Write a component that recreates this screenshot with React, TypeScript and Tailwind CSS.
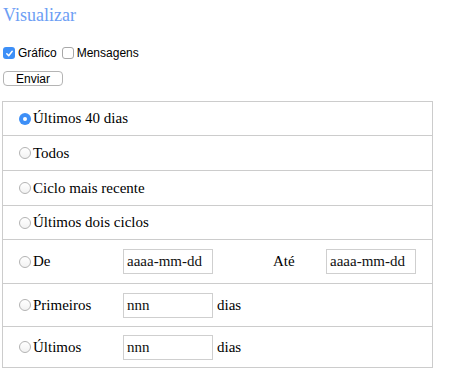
import { useState } from 'react'

type RowKind = 'last40' | 'all' | 'recent' | 'two' | 'range' | 'first' | 'last'

function Radio({ checked }: { checked: boolean }) {
  return checked ? (
    <span className="flex h-[12px] w-[12px] shrink-0 items-center justify-center rounded-full bg-[#3d8ff7]">
      <span className="h-[4px] w-[4px] rounded-full bg-white" />
    </span>
  ) : (
    <span className="block h-[12px] w-[12px] shrink-0 rounded-full border border-[#b3b3b3] bg-gradient-to-b from-white to-[#f2f2f2]" />
  )
}

function Check({ checked }: { checked: boolean }) {
  return checked ? (
    <span className="flex h-[12px] w-[12px] shrink-0 items-center justify-center rounded-[3px] bg-[#3d8ff7]">
      <svg width="9" height="9" viewBox="0 0 10 10">
        <path d="M2 5.3 L4.1 7.4 L8 2.6" fill="none" stroke="white" strokeWidth="1.7" strokeLinecap="round" strokeLinejoin="round" />
      </svg>
    </span>
  ) : (
    <span className="block h-[12px] w-[12px] shrink-0 rounded-[3px] border border-[#a8a8a8] bg-white" />
  )
}

function Field({ value }: { value: string }) {
  return (
    <div className="flex h-[25px] w-[90px] shrink-0 items-center border border-[#cfcfcf] pl-[3px] text-[15px] text-[#111]">
      {value}
    </div>
  )
}

function Option({
  label,
  checked,
  height,
  children,
}: {
  label: string
  checked: boolean
  height: string
  children?: React.ReactNode
}) {
  return (
    <div className={`flex items-center border-b border-[#cccccc] pl-[16px] last:border-b-0 ${height}`}>
      <div className="flex w-[104px] shrink-0 items-center gap-[2px]">
        <Radio checked={checked} />
        <span className="whitespace-nowrap">{label}</span>
      </div>
      {children}
    </div>
  )
}

export default function App() {
  const [selected] = useState<RowKind>('last40')

  return (
    <div className="h-[374px] w-[458px] bg-white pl-[3px] text-black">
      <h1 className="pt-[4px] text-[18px] leading-[22px] text-[#6d9ef4] [font-family:Liberation_Serif,serif]">
        Visualizar
      </h1>

      <div className="mt-[20px] flex h-[14px] items-center text-[12px] [font-family:Liberation_Sans,Arial,sans-serif]">
        <Check checked />
        <span className="ml-[3px]">Gráfico</span>
        <span className="ml-[5px] block">
          <Check checked={false} />
        </span>
        <span className="ml-[3px]">Mensagens</span>
      </div>

      <button className="mt-[11px] flex h-[15px] w-[60px] items-center justify-center rounded-[4px] border border-[#b4b4b4] bg-white text-[12px] leading-none [font-family:Liberation_Sans,Arial,sans-serif]">
        Enviar
      </button>

      <div className="ml-[-1px] mt-[15px] w-[431px] border border-[#cccccc] text-[15px] [font-family:Liberation_Serif,serif]">
        <Option label="Últimos 40 dias" checked={selected === 'last40'} height="h-[34px]" />
        <Option label="Todos" checked={selected === 'all'} height="h-[35px]" />
        <Option label="Ciclo mais recente" checked={selected === 'recent'} height="h-[35px]" />
        <Option label="Últimos dois ciclos" checked={selected === 'two'} height="h-[34px]" />
        <Option label="De" checked={selected === 'range'} height="h-[44px]">
          <Field value="aaaa-mm-dd" />
          <span className="ml-[60px] w-[53px]">Até</span>
          <Field value="aaaa-mm-dd" />
        </Option>
        <Option label="Primeiros" checked={selected === 'first'} height="h-[43px]">
          <Field value="nnn" />
          <span className="ml-[4px]">dias</span>
        </Option>
        <Option label="Últimos" checked={selected === 'last'} height="h-[40px]">
          <Field value="nnn" />
          <span className="ml-[4px]">dias</span>
        </Option>
      </div>
    </div>
  )
}
